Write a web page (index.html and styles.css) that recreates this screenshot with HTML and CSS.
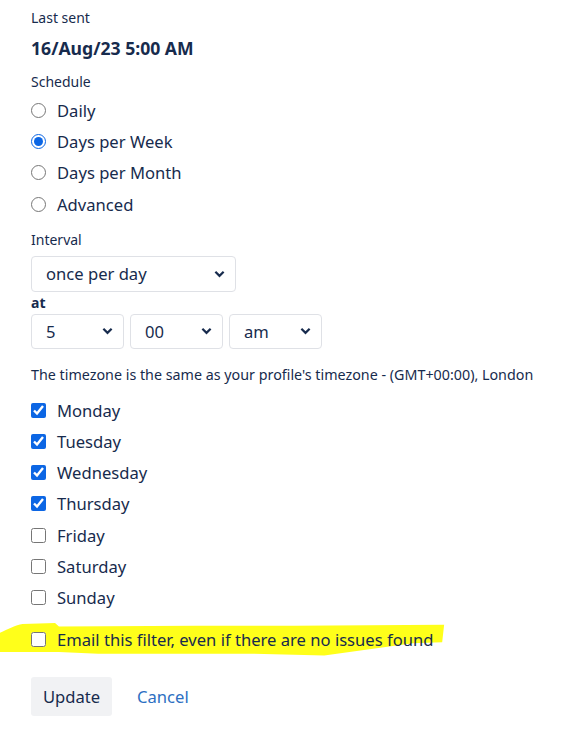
FILE: index.html
```html
<!DOCTYPE html>
<html>
  <head>
    <title>Filter subscription</title>
    <link rel="stylesheet" href="styles.css">
  </head>
  <body>
    <form class="subscription">
      <div class="label first">Last sent</div>
      <div class="last-sent">16/Aug/23 5:00 AM</div>

      <div class="label schedule">Schedule</div>
      <div class="options">
        <label class="option"><input type="radio" name="schedule"> Daily</label>
        <label class="option"><input type="radio" name="schedule" checked> Days per Week</label>
        <label class="option"><input type="radio" name="schedule"> Days per Month</label>
        <label class="option"><input type="radio" name="schedule"> Advanced</label>
      </div>

      <div class="label interval">Interval</div>
      <div class="select wide">
        <select><option>once per day</option></select>
        <svg class="chevron" viewBox="0 0 12 8"><path d="M1.5 1.5 L6 6 L10.5 1.5"/></svg>
      </div>

      <div class="label bold">at</div>
      <div class="time-row">
        <div class="select">
          <select><option>5</option></select>
          <svg class="chevron" viewBox="0 0 12 8"><path d="M1.5 1.5 L6 6 L10.5 1.5"/></svg>
        </div>
        <div class="select">
          <select><option>00</option></select>
          <svg class="chevron" viewBox="0 0 12 8"><path d="M1.5 1.5 L6 6 L10.5 1.5"/></svg>
        </div>
        <div class="select">
          <select><option>am</option></select>
          <svg class="chevron" viewBox="0 0 12 8"><path d="M1.5 1.5 L6 6 L10.5 1.5"/></svg>
        </div>
      </div>

      <p class="timezone">The timezone is the same as your profile's timezone - (GMT+00:00), London</p>

      <div class="options days">
        <label class="option"><input type="checkbox" checked> Monday</label>
        <label class="option"><input type="checkbox" checked> Tuesday</label>
        <label class="option"><input type="checkbox" checked> Wednesday</label>
        <label class="option"><input type="checkbox" checked> Thursday</label>
        <label class="option"><input type="checkbox"> Friday</label>
        <label class="option"><input type="checkbox"> Saturday</label>
        <label class="option"><input type="checkbox"> Sunday</label>
      </div>

      <div class="highlight-row">
        <svg class="marker" viewBox="0 0 460 40" preserveAspectRatio="none">
          <path d="M0 11 C8 7 16 2 23 1 L56 0 L60 4 L200 3 L300 3 L452 2 L450 22 L420 23 L330 37 L250 35 L100 35 L60 33 L0 33 Z"/>
        </svg>
        <label class="option"><input type="checkbox"> Email this filter, even if there are no issues found</label>
      </div>

      <div class="actions">
        <button type="button" class="update">Update</button>
        <a href="#" class="cancel">Cancel</a>
      </div>
    </form>
  </body>
</html>
```

FILE: styles.css
```css
body {
  margin: 0;
  background: #ffffff;
  color: #172b4d;
  font-family: "Noto Sans", "Open Sans", sans-serif;
}

.subscription {
  padding: 8px 0 0 31px;
}

/* Field labels */
.label {
  font-size: 14px;
  line-height: 20px;
}
.label.schedule {
  margin-top: 12px;
}
.label.interval {
  margin-top: 10px;
}
.label.bold {
  font-weight: bold;
  margin-top: 1px;
}

.last-sent {
  margin-top: 8px;
  font-size: 17.6px;
  line-height: 24px;
  font-weight: bold;
}

/* Radio and checkbox rows */
.options {
  margin-top: 3px;
}
.options.days {
  margin-top: 10px;
}
.option {
  display: flex;
  align-items: center;
  gap: 11px;
  height: 31.2px;
  font-size: 16.6px;
}
.option input {
  margin: 0;
  width: 15px;
  height: 15px;
  accent-color: #0c66e4;
}

/* Selects */
.select {
  position: relative;
  width: 93px;
  height: 35px;
}
.select.wide {
  width: 205px;
  height: 36px;
  margin-top: 6px;
}
.select select {
  appearance: none;
  width: 100%;
  height: 100%;
  padding: 0 0 0 14px;
  border: 1px solid #dfe1e6;
  border-radius: 4px;
  background: #ffffff;
  color: #172b4d;
  font-family: inherit;
  font-size: 16.6px;
}
.chevron {
  position: absolute;
  right: 11px;
  top: 50%;
  width: 11px;
  height: 8px;
  margin-top: -4px;
  fill: none;
  stroke: #172b4d;
  stroke-width: 2.4;
  pointer-events: none;
}
.time-row {
  display: flex;
  gap: 6px;
  margin-top: 1px;
}

.timezone {
  margin: 16px 0 0;
  font-size: 14.3px;
  line-height: 20px;
}

/* Yellow marker over the last option */
.highlight-row {
  position: relative;
  margin-top: 11px;
}
.marker {
  position: absolute;
  left: -31px;
  top: -1px;
  width: 452px;
  height: 35px;
  fill: #ffff1a;
}
.highlight-row .option {
  position: relative;
}

/* Buttons */
.actions {
  display: flex;
  align-items: center;
  gap: 25px;
  margin-top: 22px;
}
.update {
  height: 39px;
  width: 81px;
  padding: 0;
  border: none;
  border-radius: 3px;
  background: #f1f2f4;
  color: #172b4d;
  font-family: inherit;
  font-size: 16.6px;
}
.cancel {
  color: #2d6fc2;
  font-size: 16.6px;
  text-decoration: none;
}
```
